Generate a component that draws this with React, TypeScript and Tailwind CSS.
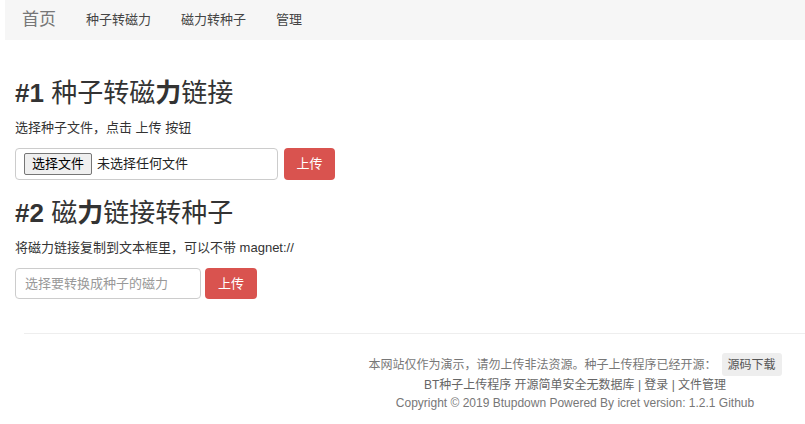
import React from 'react';

const cjk = "font-['Liberation_Sans','Noto_Sans_CJK_SC',sans-serif]";

const App: React.FC = () => {
  return (
    <div className={`min-h-[424px] bg-white text-[#333] ${cjk}`}>
      {/* 导航栏 */}
      <nav className="ml-[5px] h-[40px] bg-[#f6f6f6] flex items-center pl-[17px] gap-[30px]">
        <span className="text-[17px] text-[#777]">首页</span>
        <span className="text-[13px] text-[#444]">种子转磁力</span>
        <span className="text-[13px] text-[#444]">磁力转种子</span>
        <span className="text-[13px] text-[#444]">管理</span>
      </nav>

      <div className="px-[15px]">
        {/* 种子转磁力 */}
        <h2 className="mt-[39px] text-[26px] leading-[29px] font-normal">
          <span className="font-bold">#1</span> 种子转磁<span className="font-bold">力</span>链接
        </h2>
        <p className="mt-[10px] text-[13px] leading-[20px]">选择种子文件，点击 上传 按钮</p>
        <div className="mt-[10px] flex gap-[6px]">
          <div className="w-[263px] h-[32px] border border-[#ccc] rounded-[4px] flex items-center pl-[8px] text-[13px]">
            <span className="h-[22px] px-[7px] flex items-center bg-[#efefef] border border-[#767676] rounded-[2px] text-black">
              选择文件
            </span>
            <span className="ml-[5px] text-[#222]">未选择任何文件</span>
          </div>
          <button className="w-[51px] h-[32px] bg-[#d9534f] text-white text-[13px] rounded-[4px]">上传</button>
        </div>

        {/* 磁力转种子 */}
        <h2 className="mt-[19px] text-[26px] leading-[29px] font-normal">
          <span className="font-bold">#2</span> 磁<span className="font-bold">力</span>链接转种子
        </h2>
        <p className="mt-[10px] text-[13px] leading-[20px]">将磁力链接复制到文本框里，可以不带 magnet://</p>
        <div className="mt-[10px] flex gap-[4px]">
          <input
            className="w-[186px] h-[31px] border border-[#ccc] rounded-[4px] px-[9px] text-[13px] outline-none placeholder:text-[#999]"
            placeholder="选择要转换成种子的磁力"
          />
          <button className="w-[52px] h-[31px] bg-[#d9534f] text-white text-[13px] rounded-[4px]">上传</button>
        </div>
      </div>

      <hr className="mt-[34px] ml-[24px] border-t border-[#eee]" />

      {/* 页脚 */}
      <footer className="ml-[345px] w-[460px] text-center text-[12px] text-[#777]">
        <div className="mt-[19px] h-[23px] flex items-center justify-center">
          <span>本网站仅作为演示，请勿上传非法资源。种子上传程序已经开源：</span>
          <span className="ml-[5px] h-[23px] px-[6px] flex items-center bg-[#eee] text-[#555] rounded-[3px]">源码下载</span>
        </div>
        <p className="leading-[18px] text-[#666]">BT种子上传程序 开源简单安全无数据库 | 登录 | 文件管理</p>
        <p className="leading-[18px]">Copyright © 2019 Btupdown Powered By icret version: 1.2.1 Github</p>
      </footer>
    </div>
  );
};

export default App;
